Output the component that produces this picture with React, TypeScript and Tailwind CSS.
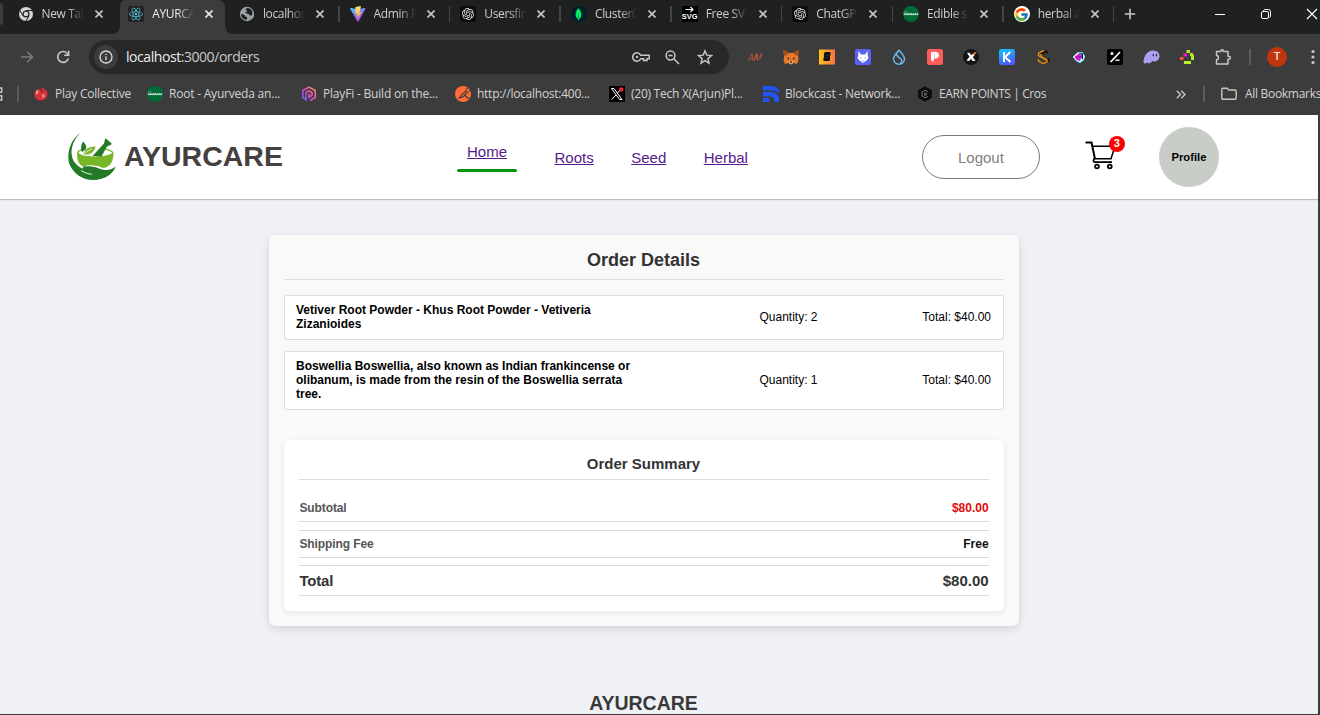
import type { ReactNode } from "react";
import { SiReact, SiMongodb, SiOpenai } from "react-icons/si";
import { FcGoogle } from "react-icons/fc";

/* ---------- favicons ---------- */

const ChromeIcon = () => (
  <svg width="16" height="16" viewBox="0 0 16 16">
    <circle cx="8" cy="8" r="7" fill="#d4d4d4" />
    <circle cx="8" cy="8" r="3.5" fill="#1f2020" />
    <circle cx="8" cy="8" r="2.3" fill="#d4d4d4" />
    <path d="M8 4.500H14.600M5 9.800 1.700 4.200M11 9.700 7.800 15.200" stroke="#1f2020" strokeWidth="1" />
  </svg>
);
const ReactIcon = () => (
  <span className="flex size-4 items-center justify-center rounded-[2px] bg-[#222]">
    <SiReact size={14} color="#58c4dc" />
  </span>
);
const GlobeIcon = () => (
  <svg width="16" height="16" viewBox="0 0 16 16">
    <circle cx="8" cy="8" r="7.2" fill="#9aa0a6" />
    <path d="M8.5 2c-2 .6-2 2-1 2.400 1 .5.5 1.600-.6 1.600C5.800 6.200 6.500 7.500 8 7.500c1.800 0 2.500 1 2.500 2h2.200c1.500-2.500.5-5.500-1.500-6.800C10.300 2.200 9.300 2 8.500 2ZM2 8.300c2 0 3.500.4 4 1.400.5 1.200 1.300 1 2 1.600.6.700-.2 1.600-.4 2.500C4.500 13.800 2 11.500 2 8.300Z" fill="#1f2020" />
  </svg>
);
const ViteIcon = () => (
  <svg width="16" height="16" viewBox="0 0 32 32">
    <defs>
      <linearGradient id="va" x1="0" y1="0" x2="0.6" y2="1">
        <stop offset="0" stopColor="#41d1ff" />
        <stop offset="1" stopColor="#bd34fe" />
      </linearGradient>
      <linearGradient id="vb" x1="0.4" y1="0" x2="0.5" y2="1">
        <stop offset="0" stopColor="#ffea83" />
        <stop offset="1" stopColor="#ffa800" />
      </linearGradient>
    </defs>
    <path d="M31 5 17 31Q16 32 15 31L0 5Q0 3.500 2 4l14 2.500L29.500 4Q31.500 4 31 5Z" fill="url(#va)" />
    <path d="m22 0-11 2.200-.8 12.300 4-.9-1.300 6 3-.9-1.500 7.800 8.600-14.500-4 .8Z" fill="url(#vb)" />
  </svg>
);
const OpenAiIcon = () => (
  <span className="flex size-4 items-center justify-center rounded-[3px] bg-[#0c0c0c]">
    <SiOpenai size={12} color="#e8e8e8" />
  </span>
);
const MongoIcon = () => (
  <span className="flex size-4 items-center justify-center rounded-full bg-[#001e2b]">
    <SiMongodb size={13} color="#00ed64" />
  </span>
);
const SvgRepoIcon = () => (
  <span className="flex size-4 flex-col items-center bg-black">
    <svg width="9" height="7" viewBox="0 0 9 7" fill="none" stroke="#fff" strokeWidth="1.100">
      <path d="M0.500 3.500H8M5.500 1 8 3.500 5.500 6" />
    </svg>
    <span className="font-['Liberation_Sans',sans-serif] text-[7.500px] leading-[8px] font-bold text-white">SVG</span>
  </span>
);
const GreenDotIcon = () => (
  <svg width="16" height="16" viewBox="0 0 16 16">
    <circle cx="8" cy="8" r="8" fill="#006b35" />
    <path d="M0.700 7.700h1.500M3 7.400h1.600M5.200 7.700h1.500M7.300 7.400h1.800M9.700 7.700h1.500M12 7.400h1.200M13.700 7.700h1.500M1 8.600h14" stroke="#d7eadf" strokeWidth="0.900" />
    <path d="M1 5.900h3.500" stroke="#7db896" strokeWidth="0.700" />
  </svg>
);
const GoogleIcon = () => (
  <span className="flex size-4 items-center justify-center rounded-full bg-white">
    <FcGoogle size={15} />
  </span>
);

const tabs: { title: string; icon: ReactNode; active?: boolean; sep?: boolean }[] = [
  { title: "New Tab", icon: <ChromeIcon /> },
  { title: "AYURCA", icon: <ReactIcon />, active: true },
  { title: "localhos", icon: <GlobeIcon />, sep: true },
  { title: "Admin P", icon: <ViteIcon />, sep: true },
  { title: "Usersfin", icon: <OpenAiIcon />, sep: true },
  { title: "Cluster0", icon: <MongoIcon />, sep: true },
  { title: "Free SV", icon: <SvgRepoIcon />, sep: true },
  { title: "ChatGP", icon: <OpenAiIcon />, sep: true },
  { title: "Edible s", icon: <GreenDotIcon />, sep: true },
  { title: "herbal a", icon: <GoogleIcon />, sep: true },
];

function TabStrip() {
  return (
    <div className="relative flex h-[34px] shrink-0 bg-[#1f2020]">
      <div className="mt-[3px] h-[22px] w-[3px] shrink-0 rounded-r-[4px] bg-[#3c3c3c]" />
      <div className="flex pl-1">
        {tabs.map((t) => (
          <div key={t.title} className="relative flex h-[34px] w-[110.700px] shrink-0 items-center pb-[6px] pl-[10.500px]">
            {t.active && (
              <svg className="absolute top-0 -left-[7px]" width="124" height="34" viewBox="0 0 124 34">
                <path d="M0 34C6 34 9 31 9 25V8C9 3 11 0 16 0H106C111 0 114 3 114 8V25C114 31 117 34 123 34Z" fill="#3c3c3c" />
              </svg>
            )}
            <span className="relative size-4 shrink-0">{t.icon}</span>
            <span
              className={
                "relative ml-2 h-[18px] w-[42px] text-[12px] leading-[18px] tracking-[-0.350px] whitespace-nowrap [mask-image:linear-gradient(to_right,black_60%,transparent_100%)] " +
                (t.active ? "text-[#e8e8e8]" : "text-[#cdcfcf]")
              }
            >
              {t.title}
            </span>
            <svg
              className="relative ml-[11px] shrink-0"
              width="8"
              height="8"
              viewBox="0 0 8 8"
              stroke={t.active ? "#e8e8e8" : "#c7c7c7"}
              strokeWidth="1.600"
            >
              <path d="m.5.5 7 7M7.500.5l-7 7" />
            </svg>
            {t.sep && <span className="absolute top-[6px] right-[-0.500px] h-4 w-[1.500px] bg-[#454646]" />}
          </div>
        ))}
      </div>
      <svg className="mt-[8px] ml-[10px] shrink-0" width="12" height="12" viewBox="0 0 12 12" stroke="#c7c7c7" strokeWidth="1.600">
        <path d="M6 .8V11.200M.8 6H11.200" />
      </svg>
      <svg className="mt-[8px] ml-auto shrink-0" width="106" height="12" viewBox="0 0 106 12" fill="none" stroke="#fff" strokeWidth="1">
        <path d="M1 6.500H11" />
        <rect x="47.500" y="3.500" width="7" height="7" rx="1.500" />
        <path d="M49.500 3V2.500Q50 1.500 51 1.500H54.500Q56.500 1.500 56.500 3.500V8Q56.500 9 55.500 9.500" />
        <path d="m93 1 10 10M103 1 93 11" strokeWidth="1.200" />
      </svg>
    </div>
  );
}

/* ---------- toolbar ---------- */

const extensions: ReactNode[] = [
  <svg key="n" width="16" height="16" viewBox="0 0 16 16" fill="none" stroke="#c2593a" strokeWidth="0.800">
    <path d="M.8 12 5 4.500 6.200 12 9.500 4M3 12l2.500-4.500M7.500 12 10.500 5.500 10.500 11.500 14.800 4M10 4.500 8.500 10M12.500 10.500 15.200 5" />
  </svg>,
  <svg key="fox" width="16" height="16" viewBox="0 0 16 16">
    <path d="M.5 1 6 4h4l5.500-3-.3 6 .3 4-1.500 4-3.500-1-2 1.500h-1L5.500 14 2 15 .5 11l.6-4Z" fill="#e8792a" />
    <path d="M.5 1 6 4 4 6 1 7ZM15.500 1 10 4l2 2 3 1Z" fill="#a8501d" />
    <path d="m3.500 8 3 1.200L5.500 11ZM12.500 8l-3 1.200 1 1.800Z" fill="#3a3a3a" />
    <path d="M5.800 12.500h4.400L9.500 14.500h-3Z" fill="#d6c4b2" />
    <path d="M7 12.500h2v1.200H7Z" fill="#222" />
  </svg>,
  <svg key="s" width="16" height="16" viewBox="0 0 16 16">
    <defs>
      <linearGradient id="so" x1="0" x2="1">
        <stop stopColor="#fcc419" />
        <stop offset="1" stopColor="#fa7044" />
      </linearGradient>
    </defs>
    <rect width="16" height="15" y=".5" fill="url(#so)" />
    <path d="M6 3h5.500v3.300l-.5.700v4L10 12H4.500V9.300l.5-.8v-4Z" fill="#111" />
    <path d="M7 6.500h2.500M6.500 8.800h2.500" stroke="#6b4815" strokeWidth=".5" />
  </svg>,
  <svg key="wolf" width="16" height="16" viewBox="0 0 16 16">
    <rect width="16" height="16" rx="2" fill="#5b61f4" />
    <path d="M3.500 2 6 5.500h4L12.500 2l.3 5 .7 2-2 2.500L8 14l-3.500-2.500-2-2.500.7-2Z" fill="#fff" />
    <path d="m4.600 8 2 1-.4.800ZM11.400 8l-2 1 .4.800ZM7 11.800h2l-1 1Z" fill="#5b61f4" />
  </svg>,
  <svg key="sui" width="16" height="16" viewBox="0 0 16 16" fill="none" stroke="#6fbcf0" strokeWidth="1.400">
    <path d="M8 1.200C5.500 4.300 2.500 7 2.500 10a5.500 5.300 0 0 0 11 0C13.500 7 10.500 4.300 8 1.200Z" />
    <path d="M6 4.500C4.800 7 7 8 9 9.200c2 1.200 2.200 3.300.5 5.500" />
  </svg>,
  <svg key="p" width="16" height="16" viewBox="0 0 16 16">
    <rect width="16" height="16" rx="2.500" fill="#ff5d5d" />
    <path d="M4 3.500 7 2.700v8L5.800 13 4 10.700ZM7.300 2.700c6-.5 6.300 6.800.9 6.700L7.300 10Z" fill="#fff" />
  </svg>,
  <svg key="x" width="16" height="16" viewBox="0 0 16 16">
    <circle cx="8" cy="8" r="8" fill="#151515" />
    <path d="M4 3.800h2.600L8.200 6.200 10 4.500l1.500 1.700L9.800 8.300 12.500 12H9.700L8 9.800 6 12 3.500 11.500 6.500 7.800Z" fill="#fff" />
    <path d="m10 5 1.600-2h2.200l-2.500 3.300Z" fill="#f27825" />
  </svg>,
  <svg key="k" width="16" height="16" viewBox="0 0 16 16">
    <defs>
      <linearGradient id="kp" x1="0" x2=".3" y2="1">
        <stop stopColor="#08c8f6" />
        <stop offset="1" stopColor="#4d5dfb" />
      </linearGradient>
    </defs>
    <rect width="16" height="16" rx="2.500" fill="url(#kp)" />
    <path d="M5 3V13M11.300 3 6 8l5.500 5" stroke="#fff" strokeWidth="2" fill="none" />
  </svg>,
  <svg key="sender" width="16" height="16" viewBox="0 0 16 16" fill="none">
    <path d="M10 2 13 4M13.500 9.500V12L8.500 15M10.500 2.500 6 5" stroke="#1d1206" strokeWidth="2.200" />
    <path d="M9 1.300 3.500 4.200V6.500L12 11.500V13L8 14.800M6 5V7.500l6 3.500M3.500 10v2l4.500 2.500" stroke="#ef8e16" strokeWidth="1.400" />
  </svg>,
  <svg key="gem" width="16" height="16" viewBox="0 0 16 16">
    <path d="M2 8 7 3h4l3 4-1 4-4 3-4-2Z" fill="#9ff" />
    <path d="M2 8 6 4.200 6.500 12Z" fill="#fff" />
    <path d="m8 3 4 2v5.500L10.500 9V6Z" fill="#161032" />
    <path d="m3.500 8 5-4L11 8l-2.500 4-3-1Z" fill="#d915d7" />
    <path d="m4 8 7-.3" stroke="#560767" strokeWidth=".5" />
  </svg>,
  <svg key="pct" width="16" height="16" viewBox="0 0 16 16">
    <rect width="16" height="16" rx="2" fill="#000" />
    <path d="M3.500 13 8.500 7.800 13 3" stroke="#fff" strokeWidth="1.700" />
    <circle cx="5" cy="4.500" r="1.500" fill="#fff" />
    <path d="M8.500 11.200h4" stroke="#fff" strokeWidth="1.400" />
  </svg>,
  <svg key="ghost" width="17" height="16" viewBox="0 0 17 16">
    <path d="M.5 12.500C1 6 5 1.500 10 1.500c4 0 6.500 2.200 6.500 5.500 0 3-2.500 5.500-5 5.500-1 0-1.500-.4-1.800-1-1 1.700-2.500 2.900-4 2.900-.8 0-1.200-.5-1.200-1.200-1 .8-1.800 1.300-2.700 1.200-.9 0-1.400-.9-1.300-1.900Z" fill="#ab9ff2" />
    <path d="M10.300 5v2.300M13.500 5v2.300" stroke="#33304b" strokeWidth="1.300" />
  </svg>,
  <svg key="pix" width="16" height="16" viewBox="0 0 16 16">
    <path d="M7.500 1h3.500v3H7.500ZM11 4h3v2h1v5h-3V7h-1ZM5 12h7v3H5Z" fill="#b8ec2b" />
    <path d="M4.500 4.500h3.500v3H4.500Z" fill="#fb12d6" />
    <path d="M1 8h3.500v3H1Z" fill="#ff5435" />
  </svg>,
  <svg key="ext" width="18" height="18" viewBox="0 0 18 18" fill="none" stroke="#c7c7c7" strokeWidth="1.500">
    <path d="M2.500 3.500H7V3q0-1.300 1.200-1.300T9.400 3v.5h4.600V8.300h.7q1.600 0 1.600 1.500t-1.600 1.500H14V16H2.500V11.800c2.600-.2 2.600-4 0-4.200Z" strokeLinejoin="round" />
  </svg>,
];

function Toolbar() {
  return (
    <div className="flex h-[46px] shrink-0 items-center bg-[#3c3c3c]">
      <svg className="ml-[20px] shrink-0" width="14" height="14" viewBox="0 0 14 14" fill="none" stroke="#7c7c7c" strokeWidth="1.500">
        <path d="M1 7H12.300M7.200 1.800 12.500 7 7.200 12.200" />
      </svg>
      <svg className="ml-[22px] shrink-0" width="14" height="14" viewBox="0 0 14 14" fill="none" stroke="#c7c7c7" strokeWidth="1.600">
        <path d="M12.300 8.500A5.400 5.400 0 1 1 11 3.200L12.300 4.600" />
        <path d="M12.600.8V5.200H8.200" />
      </svg>
      <div className="ml-[19px] flex h-[34px] w-[640px] shrink-0 items-center rounded-full bg-[#282828] pl-[5px]">
        <span className="flex size-6 shrink-0 items-center justify-center rounded-full bg-[#3c3c3c]">
          <svg width="14" height="14" viewBox="0 0 14 14" fill="none" stroke="#dcdcdc" strokeWidth="1.300">
            <circle cx="7" cy="7" r="6" />
            <path d="M7 6.200V10.300M7 3.700V5" />
          </svg>
        </span>
        <span className="ml-2 pb-px text-[14px] tracking-[-0.440px] whitespace-nowrap text-[#c9c9c9]">
          <span className="text-[#ececec]">localhost</span>:3000/orders
        </span>
        <svg className="ml-auto" width="18" height="14" viewBox="0 0 18 14" fill="none" stroke="#c7c7c7" strokeWidth="1.500">
          <path d="M8.700 5.200a4.200 4.200 0 1 0 0 3.600H11.500V10.500H15V8.800H17.200V5.200Z" />
          <circle cx="5" cy="7" r="1.200" fill="#c7c7c7" stroke="none" />
        </svg>
        <svg className="ml-[15px]" width="15" height="15" viewBox="0 0 15 15" fill="none" stroke="#c7c7c7" strokeWidth="1.500">
          <circle cx="5.500" cy="5.500" r="4.400" />
          <path d="m8.800 8.800 5.200 5.200M3.500 5.500h4" />
        </svg>
        <svg className="mr-[16px] ml-[17px]" width="16" height="16" viewBox="0 0 16 16" fill="none" stroke="#c7c7c7" strokeWidth="1.400">
          <path d="m8 1.800 1.800 4.300 4.700.4-3.600 3.100 1.100 4.600L8 11.700l-4 2.500 1.100-4.600L1.500 6.500l4.700-.4Z" />
        </svg>
      </div>
      <div className="ml-2 flex shrink-0">
        {extensions.map((e, i) => (
          <span key={i} className="flex size-9 items-center justify-center">
            {e}
          </span>
        ))}
      </div>
      <span className="ml-[8px] h-4 w-[1.500px] shrink-0 bg-[#5c5c5c]" />
      <span className="ml-[16.500px] flex size-5 shrink-0 items-center justify-center rounded-full bg-[#bf360c] font-['Roboto',sans-serif] text-[11px] font-medium text-[#f3e3dd]">
        T
      </span>
      <svg className="ml-[24px] shrink-0" width="4" height="16" viewBox="0 0 4 16" fill="#c7c7c7">
        <circle cx="2" cy="2.500" r="1.600" />
        <circle cx="2" cy="8" r="1.600" />
        <circle cx="2" cy="13.500" r="1.600" />
      </svg>
    </div>
  );
}

/* ---------- bookmarks ---------- */

const PlayIcon = () => (
  <svg width="16" height="16" viewBox="0 0 16 16">
    <path d="M2 5.500C3.500 2.500 6 3.500 7.500 3.500L11 1.500 11.500 3.500 14 5c1 3 .5 6-1.500 8-3 2.300-7 1.500-9 0C1 11 1 8 2 5.500Z" fill="#d3353b" />
    <path d="M3 5.500 5.500 4 5 7 3 9ZM9.500 8l2 .8v2L9.500 12Z" fill="#f4a5a0" />
    <path d="m8 3.500 3 1.500-3.500 1Z" fill="#7e1c23" />
    <path d="M3 13.500c3 1.800 7 1.500 9.500-.5" stroke="#8b2026" fill="none" />
  </svg>
);
const PlayFiIcon = () => (
  <svg width="16" height="16" viewBox="0 0 16 16" fill="none">
    <defs>
      <linearGradient id="pf" x1="1" y1="0" x2="0" y2="1">
        <stop stopColor="#ff9a45" />
        <stop offset=".5" stopColor="#e84bd0" />
        <stop offset="1" stopColor="#5a63ff" />
      </linearGradient>
    </defs>
    <path d="M4.800 13.300 1.800 11.500V4.500L8 1l6.200 3.500v7L9 14.500M5 15V6.500L8 4.800l3 1.700v3L8 11.200V7.500" stroke="url(#pf)" strokeWidth="1.500" />
  </svg>
);
const PostmanIcon = () => (
  <svg width="16" height="16" viewBox="0 0 16 16">
    <circle cx="8" cy="8" r="8" fill="#ff6c37" />
    <path d="M11.500 4.800 6.500 8.800 4.500 12l3.500-1.200 4.500-4.500M9 8.800l5 4" stroke="#3c3c3c" strokeWidth="1.200" fill="none" />
    <circle cx="13" cy="4" r="2" fill="#ff6c37" stroke="#3c3c3c" strokeWidth=".8" />
  </svg>
);
const XIcon = () => (
  <svg width="16" height="16" viewBox="0 0 16 16" fill="none" stroke="#fff">
    <rect width="16" height="16" fill="#000" stroke="none" />
    <path d="M2.500 2.500H5L13 13.500H10.500ZM2.800 13.500 7 9M8.500 7 12 3" />
    <circle cx="12.300" cy="3.500" r="2.200" fill="#f4212e" stroke="none" />
  </svg>
);
const BlockcastIcon = () => (
  <svg width="16" height="16" viewBox="0 0 16 16" fill="#1f54f5">
    <path d="M0 0h8c4.500 0 7 2 8 5v2.500C14 4.800 11 4.500 8 4.500H0ZM0 6h8c4 0 7 2.500 8 5.500V16h-4.500c0-3.500-1.500-5.500-4.500-5.500H0ZM0 12h4.500c1.200 0 2 1.500 2 4H0Z" />
  </svg>
);
const CrosIcon = () => (
  <svg width="16" height="16" viewBox="0 0 16 16" fill="none">
    <path d="m8 .3 6.800 3.900v7.600L8 15.700 1.200 11.800V4.200Z" fill="#0b0b0b" />
    <path d="M11 5.500 8 4.300 5 6v4l3 1.700 3-1.200M10 7.200H7.500v1.800H10" stroke="#777" strokeWidth="1" />
  </svg>
);

const bookmarks: { label: string; icon: ReactNode; box: string }[] = [
  { label: "Play Collective", icon: <PlayIcon />, box: "w-[114px] tracking-[-0.230px]" },
  { label: "Root - Ayurveda an...", icon: <GreenDotIcon />, box: "w-[154px] tracking-[-0.210px]" },
  { label: "PlayFi - Build on the...", icon: <PlayFiIcon />, box: "w-[154px] tracking-[-0.190px]" },
  { label: "http://localhost:400...", icon: <PostmanIcon />, box: "w-[154px] tracking-[-0.260px]" },
  { label: "(20) Tech X(Arjun)Pl...", icon: <XIcon />, box: "w-[154px] tracking-[-0.260px]" },
  { label: "Blockcast - Network...", icon: <BlockcastIcon />, box: "w-[154px] tracking-[-0.210px]" },
  { label: "EARN POINTS | Cros", icon: <CrosIcon />, box: "w-[154px] tracking-[-0.400px]" },
];

function BookmarksBar() {
  return (
    <div className="flex h-[35px] shrink-0 items-center overflow-hidden bg-[#3c3c3c] pb-[7px] text-[12px] whitespace-nowrap text-[#d3d3d3]">
      <svg className="shrink-0" width="3" height="14" viewBox="0 0 3 14" fill="none" stroke="#c7c7c7" strokeWidth="1.400">
        <path d="M0 1H1.700V5.300H0M0 8.700H1.700V13H0" />
      </svg>
      <span className="ml-[14px] h-4 w-[1.500px] shrink-0 bg-[#5c5c5c]" />
      <div className="ml-[14.500px] flex shrink-0">
        {bookmarks.map((b) => (
          <span key={b.label} className={"flex shrink-0 items-center gap-[6px] " + b.box}>
            <span className="size-4 shrink-0">{b.icon}</span>
            {b.label}
          </span>
        ))}
      </div>
      <svg className="ml-[105px] shrink-0" width="10" height="9" viewBox="0 0 10 9" fill="none" stroke="#c7c7c7" strokeWidth="1.400">
        <path d="m.8.8 3.700 3.700L.8 8.200M5.300.8 9 4.500 5.300 8.200" />
      </svg>
      <span className="ml-[17px] h-4 w-[1.500px] shrink-0 bg-[#5c5c5c]" />
      <svg className="ml-[16.500px] shrink-0" width="16" height="14" viewBox="0 0 16 14" fill="none" stroke="#c7c7c7" strokeWidth="1.400">
        <path d="M.8 2.500Q.8 1.300 2 1.300H6L7.700 3H14Q15.200 3 15.200 4.200V11Q15.200 12.300 14 12.300H2Q.8 12.300.8 11Z" />
      </svg>
      <span className="ml-[8px] tracking-[-0.300px]">All Bookmarks</span>
    </div>
  );
}

/* ---------- shop page ---------- */

const LogoMark = () => (
  <svg width="48" height="48" viewBox="0 0 48 48">
    <path d="M12.500 0C3 6-1.500 19 1 30c4 11 14 17 24 17 10-.3 19-5 22.500-13-4.500 3.500-8 4.500-13 3-6-2-9-4-15-2.500C11 30 4 28 3.500 20 3.500 12 7 5 12.500 0Z" fill="#257a28" />
    <path d="M4 24c2 6 6 10 12 12 0-3-1-4-3-6L8 20Z" fill="#fff" />
    <path d="M14 35c5-3 12-1.500 17 .5 7 2.500 11 2 16.500-1.500C44 42 36 46.500 26 46.500c-8 0-15-4-19-10 6 4 11 5 17 5-3-2-6-4-10-6.500Z" fill="#257a28" />
    <path d="M13 37.500c4 2.500 7 3.300 11 3.800" stroke="#fff" strokeWidth=".9" fill="none" />
    <path d="M9 20.500C9 29 12 32 15 33.500c7-2.500 16-.5 20 1.500C42.500 34 45.500 28 45.500 20c-9 4.500-27 5-36.500.5Z" fill="#76b627" />
    <path d="M9.300 20c1-2 3-3 5-3.200M9.300 20c5 5.500 31 6 35.700 0-.7-1.800-3-2.800-7.500-3.800" stroke="#76b627" strokeWidth="1.200" fill="none" />
    <path d="m24.500 23 11.500-12.500 1-4.500q1-.5 1.800.2l4.700 4q.5 1.300-1 1.800L39 13.500 33.500 23.500Z" fill="#257a28" />
    <path d="M14 19c-2-4-.5-7.500 1-10.500 2 2 4 4.500 3 8Z" fill="#257a28" />
    <path d="M15 22c1.500-6.500 5.500-8.500 13-9-1.500 6-4.500 9.500-13 9Z" fill="#76b627" stroke="#fff" strokeWidth=".7" />
    <path d="M16 21.500c3-3 5-4.500 8-5.500" stroke="#fff" strokeWidth=".8" fill="none" />
  </svg>
);

const CartIcon = () => (
  <svg width="32" height="30" viewBox="0 0 32 30" fill="none" stroke="#000" strokeWidth="1.500">
    <path d="M.5 1.500H6.500L10 18" strokeWidth="2" />
    <path d="M8 5.300H30L26 17.700H10" />
    <path d="M10 17.700C8 18 7.700 21 10 21.200H27" strokeWidth="1.700" />
    <circle cx="12" cy="25.500" r="1.900" strokeWidth="1.800" />
    <circle cx="24.800" cy="25.500" r="1.900" strokeWidth="1.800" />
  </svg>
);

function SiteHeader() {
  return (
    <header className="relative flex h-[84px] shrink-0 items-center bg-white pl-[68px] shadow-[0_1px_1px_rgba(0,0,0,0.220)]">
      <LogoMark />
      <span className="ml-2 w-[333px] pb-[2px] text-[28.500px] leading-[32px] font-bold text-[#444040]">AYURCARE</span>
      <nav className="flex h-full items-center gap-[37.500px] text-[15px] leading-[17px] text-[#551a8b]">
        <span className="flex w-[60px] flex-col items-center gap-[9px] pt-px">
          <a className="underline">Home</a>
          <span className="h-[3px] w-full rounded-full bg-[#0a930a]" />
        </span>
        <a className="underline">Roots</a>
        <a className="underline">Seed</a>
        <a className="underline">Herbal</a>
      </nav>
      <button className="ml-[174px] h-[44px] w-[118px] rounded-full border border-[#7a7a7a] bg-white pt-[2px] text-[15px] text-[#808080]">
        Logout
      </button>
      <div className="relative ml-[45px] flex w-[40px] pb-[3px]">
        <CartIcon />
        <span className="absolute -top-[5px] right-0 flex size-4 items-center justify-center rounded-full bg-[#f00] text-[11px] leading-none font-bold text-white">
          3
        </span>
      </div>
      <button className="ml-[34px] size-[60px] rounded-full bg-[#c8cec7] text-[11.250px] font-bold text-black">Profile</button>
    </header>
  );
}

const items = [
  { name: "Vetiver Root Powder - Khus Root Powder - Vetiveria Zizanioides", qty: 2, total: "$40.00" },
  {
    name: "Boswellia Boswellia, also known as Indian frankincense or olibanum, is made from the resin of the Boswellia serrata tree.",
    qty: 1,
    total: "$40.00",
  },
];

function OrderCard() {
  return (
    <section className="mt-[36px] ml-[269px] w-[750px] shrink-0 rounded-[6px] bg-[#f9f9f9] p-[15px] shadow-[0_3px_9px_rgba(0,0,0,0.120)]">
      <h2 className="h-[30px] border-b border-[#ddd] pr-px text-center text-[18px] leading-[20px] font-bold text-[#333]">Order Details</h2>
      <div className="mt-[15px] flex flex-col gap-[11px]">
        {items.map((it) => (
          <div
            key={it.name}
            className="flex items-center rounded-[3px] border border-[#ddd] bg-white pt-[6.500px] pr-[12px] pb-[8.500px] pl-[11px] text-[12px] leading-[14px] text-black"
          >
            <span className="w-[349px] font-bold">{it.name}</span>
            <span className="ml-[114.500px]">Quantity: {it.qty}</span>
            <span className="ml-auto">Total: {it.total}</span>
          </div>
        ))}
      </div>
      <div className="mt-[30px] h-[171px] rounded-[6px] bg-white p-[15px] text-[12px] leading-[14px] font-bold shadow-[0_2px_6px_rgba(0,0,0,0.080)]">
        <h3 className="h-[25px] border-b border-[#ddd] pr-px text-center text-[15px] leading-[18px] text-[#333]">Order Summary</h3>
        <div className="mt-[14px] flex h-[28px] items-center justify-between border-b border-[#ddd] px-[0.400px]">
          <span className="tracking-[-0.100px] text-[#555]">Subtotal</span>
          <span className="text-[#e60a0a]">$80.00</span>
        </div>
        <div className="mt-[8px] flex h-[28px] items-center justify-between border-y border-[#ddd] px-[0.400px]">
          <span className="tracking-[-0.100px] text-[#555]">Shipping Fee</span>
          <span className="text-[#111]">Free</span>
        </div>
        <div className="mt-[7px] flex h-[31px] items-center justify-between border-y border-[#ddd] px-[0.400px] text-[15px] text-[#333]">
          <span className="tracking-[-0.200px]">Total</span>
          <span>$80.00</span>
        </div>
      </div>
    </section>
  );
}

export default function App() {
  return (
    <div className="flex h-[715px] w-[1320px] flex-col overflow-hidden bg-[#3c3c3c] font-['Open_Sans','Noto_Sans',sans-serif]">
      <TabStrip />
      <Toolbar />
      <BookmarksBar />
      <main className="flex h-[599px] w-[1318px] shrink-0 flex-col overflow-hidden bg-[#f0f1f6] font-['Liberation_Sans',Arial,sans-serif]">
        <SiteHeader />
        <OrderCard />
        <footer className="mt-[66px] w-[1287px] text-center text-[19.500px] leading-[22px] font-bold text-[#383838]">AYURCARE</footer>
      </main>
    </div>
  );
}
